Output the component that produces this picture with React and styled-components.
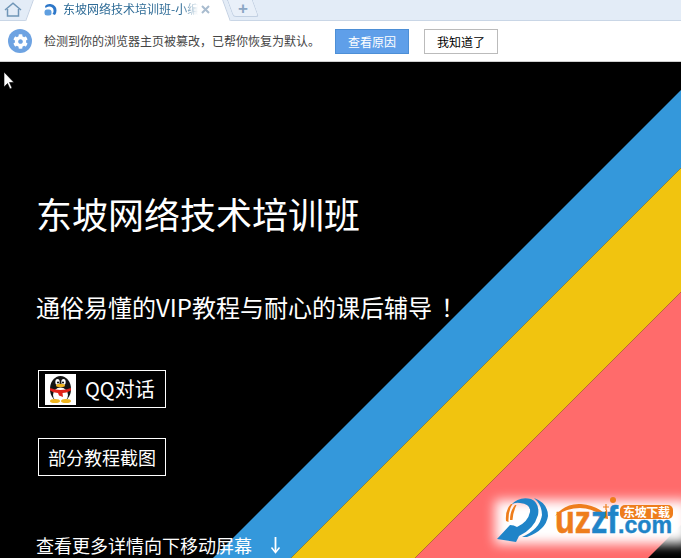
import React from 'react'
import styled, { createGlobalStyle } from 'styled-components'
import { FaCog } from 'react-icons/fa'

const Reset = createGlobalStyle`
  html, body { margin: 0; padding: 0; background: #000; overflow: hidden; }
  * { box-sizing: border-box; }
  body { font-family: "Noto Sans CJK SC", "Liberation Sans", sans-serif; }
`

const Page = styled.div`
  width: 681px;
  height: 558px;
  display: flex;
  flex-direction: column;
  overflow: hidden;
`

const TabBar = styled.div`
  height: 21px;
  flex: none;
  display: flex;
  align-items: stretch;
  background: #e3ecf7;
  border-bottom: 1px solid #c9d6e6;
`

const HomeButton = styled.div`
  width: 33px;
  flex: none;
  padding: 2px 0 0 4px;
`

const HomeIcon = styled.svg`
  display: block;
  width: 18px;
  height: 15px;
`

const Tab = styled.div`
  position: relative;
  width: 190px;
  height: 21px;
  flex: none;
  display: flex;
  align-items: center;
  padding: 0 0 3px 11px;
  background: #fff;
  z-index: 1;

  &::before, &::after {
    content: '';
    position: absolute;
    top: 0;
    bottom: 0;
    width: 8px;
    background: #fff;
    border: 0 solid #c2d0e2;
  }
  &::before {
    left: -4px;
    transform: skewX(-20deg);
    border-left-width: 1px;
  }
  &::after {
    right: -4px;
    transform: skewX(20deg);
    border-right-width: 1px;
  }
`

const TabIcon = styled.svg`
  width: 13px;
  height: 13px;
  flex: none;
  position: relative;
  z-index: 1;
`

const TabTitle = styled.span`
  width: 135px;
  margin-left: 6px;
  flex: none;
  overflow: hidden;
  white-space: nowrap;
  font-size: 12px;
  line-height: 16px;
  color: #2f6c97;
  -webkit-mask-image: linear-gradient(to right, #000 88%, transparent 100%);
  mask-image: linear-gradient(to right, #000 88%, transparent 100%);
`

const TabClose = styled.svg`
  width: 9px;
  height: 9px;
  margin-left: 3px;
  flex: none;
  position: relative;
  z-index: 1;
`

const NewTab = styled.div`
  width: 26px;
  height: 17px;
  margin-left: 7px;
  flex: none;
  display: flex;
  align-items: center;
  justify-content: center;
  position: relative;
  font-size: 17px;
  font-weight: 700;
  line-height: 15px;
  color: #8ba6c4;
  background: #e9f0f9;
  border: 1px solid #c2d0e2;
  border-top: 0;
  border-radius: 0 0 3px 3px;
  transform: skewX(20deg);
  font-family: "Liberation Sans", sans-serif;

  span { transform: skewX(-20deg); }
`

const InfoBar = styled.div`
  height: 41px;
  flex: none;
  display: flex;
  align-items: center;
  padding: 0 0 0 8px;
  background: #fff;
  border-bottom: 1px solid #cfcfcf;
`

const InfoIcon = styled.div`
  width: 24px;
  height: 24px;
  flex: none;
  display: flex;
  align-items: center;
  justify-content: center;
  border-radius: 50%;
  background: #6ea3e2;
  color: #fff;
  font-size: 15px;
`

const InfoText = styled.span`
  width: 291px;
  margin-left: 12px;
  flex: none;
  font-size: 12px;
  line-height: 16px;
  white-space: nowrap;
  color: #444;
`

const InfoButton = styled.button`
  width: 74px;
  height: 25px;
  padding: 0;
  margin-right: 15px;
  flex: none;
  font: inherit;
  font-size: 12px;
  color: ${({ $primary }) => ($primary ? '#fff' : '#000')};
  background: ${({ $primary }) => ($primary ? '#5f9fe9' : '#fff')};
  border: 1px solid ${({ $primary }) => ($primary ? '#4d8fd6' : '#bbb')};
`

const Hero = styled.main`
  position: relative;
  flex: 1;
  overflow: hidden;
  background: #000;
  color: #fff;
`

const Stripes = styled.svg`
  position: absolute;
  left: 0;
  top: 0;
  width: 681px;
  height: 496px;
`

const Cursor = styled.svg`
  position: absolute;
  left: 3px;
  top: 9px;
  width: 12px;
  height: 21px;
`

const Content = styled.div`
  position: relative;
  display: flex;
  flex-direction: column;
  align-items: flex-start;
  padding: 127px 0 0 36px;
`

const Title = styled.h1`
  margin: 0;
  font-size: 36px;
  font-weight: 400;
  line-height: 48px;
  white-space: nowrap;
`

const Subtitle = styled.h2`
  margin: 54px 0 0;
  font-size: 24px;
  font-weight: 400;
  line-height: 32px;
  white-space: nowrap;
`

const Bang = styled.span`
  margin-left: 9px;
`

const LinkButton = styled.a`
  width: 128px;
  height: 38px;
  margin: ${({ $gap }) => $gap}px 0 0 2px;
  display: flex;
  align-items: center;
  justify-content: ${({ $icon }) => ($icon ? 'flex-start' : 'center')};
  padding-left: ${({ $icon }) => ($icon ? '6px' : '0')};
  border: 1px solid #fff;
  font-size: ${({ $icon }) => ($icon ? '20px' : '18px')};
  line-height: 26px;
  white-space: nowrap;
`

const Penguin = styled.svg`
  width: 31px;
  height: 31px;
  margin-right: 9px;
  flex: none;
  background: #fff;
`

const MoreHint = styled.div`
  margin-top: 57px;
  display: flex;
  align-items: center;
  font-size: 18px;
  line-height: 24px;
  white-space: nowrap;
`

const DownArrow = styled.svg`
  width: 11px;
  height: 17px;
  margin-left: 18px;
  flex: none;
`

const Watermark = styled.div`
  position: absolute;
  left: 497px;
  top: 433px;
  width: 178px;
  height: 52px;

  &::before {
    content: '';
    position: absolute;
    left: -2px;
    right: -14px;
    top: 5px;
    bottom: 3px;
    background: #fff;
    filter: blur(6px);
  }
`

const LogoArt = styled.svg`
  position: relative;
  display: block;
  width: 178px;
  height: 52px;
  overflow: visible;
`

const QQPenguin = () => (
  <Penguin viewBox="0 0 31 31">
    <ellipse cx="15.5" cy="15" rx="10.5" ry="13" fill="#141414" />
    <ellipse cx="15.5" cy="21" rx="7.5" ry="7.5" fill="#fff" />
    <ellipse cx="12.5" cy="8" rx="2.2" ry="3" fill="#fff" />
    <ellipse cx="18.5" cy="8" rx="2.2" ry="3" fill="#fff" />
    <circle cx="13" cy="8.5" r="1.1" fill="#141414" />
    <circle cx="18" cy="8.5" r="1.1" fill="#141414" />
    <ellipse cx="15.5" cy="11.5" rx="4.5" ry="1.7" fill="#f0b51e" />
    <path d="M5 14 Q15.5 18 26 14 L26 16.5 Q21 19 17.5 19 L18 23 L14 21.5 L13 19 Q8 18.5 5 16.5 Z" fill="#e2231a" />
    <ellipse cx="10" cy="27" rx="5" ry="2" fill="#f0b51e" />
    <ellipse cx="21" cy="27" rx="5" ry="2" fill="#f0b51e" />
  </Penguin>
)

const Logo = () => (
  <LogoArt viewBox="0 0 178 52">
    <path d="M0 44 L13 30 Q17 30 20 32 Q31 27 33 17 Q34 9 23 8 Q18 7 14 10 Q22 1 34 4 Q43 8 41 20 Q37 34 22 41 L19 47 Z" fill="#1f84c8" />
    <path d="M37 3 Q51 8 51 21 Q49 35 30 42 L25 42 Q43 34 45 20 Q45 10 37 3 Z" fill="#1f84c8" />
    <path d="M9 26 Q8 15 14 9 L15.5 9 Q11 16 11.5 27 Z" fill="#ee7d1c" />
    <path d="M13 25 Q13 16 18 10 L19.5 10 Q16 17 15.5 25 Z" fill="#ee7d1c" />
    <path d="M58 21 Q68 8 84 9 Q98 10 107 18 L110 14 L111 24 L101 22 L104 20 Q94 13 83 13 Q70 13 58 21 Z" fill="#ee7d1c" />
    <text x="58" y="38" textLength="36" lengthAdjust="spacingAndGlyphs" fontFamily="'Liberation Sans', sans-serif" fontWeight="700" fontSize="38" fill="#ee7d1c" stroke="#ee7d1c" strokeWidth="0.6">uz</text>
    <text x="94" y="38" textLength="27" lengthAdjust="spacingAndGlyphs" fontFamily="'Liberation Sans', sans-serif" fontWeight="700" fontSize="38" fill="#1f84c8" stroke="#1f84c8" strokeWidth="0.6">zf</text>
    <text x="121" y="38" textLength="54" lengthAdjust="spacingAndGlyphs" fontFamily="'Liberation Sans', sans-serif" fontWeight="700" fontSize="23" fill="#1f84c8" stroke="#1f84c8" strokeWidth="0.4">.com</text>
    <circle cx="116" cy="5" r="3" fill="#ee7d1c" />
    <path d="M106 12 h6 M109 9 v6" stroke="#ee7d1c" strokeWidth="1.2" />
    <rect x="123" y="10" width="53" height="14" rx="5" fill="#ee7d1c" />
    <text x="126" y="21.5" textLength="47" fontFamily="'Noto Sans CJK SC', sans-serif" fontWeight="700" fontSize="12" fill="#fff">东坡下载</text>
  </LogoArt>
)

const App = () => (
  <Page>
    <Reset />
    <TabBar>
      <HomeButton>
        <HomeIcon viewBox="0 0 18 15" fill="none" stroke="#6f95b7" strokeWidth="1.5">
          <path d="M1 8 L9 1.2 L17 8" />
          <path d="M3.5 7 V14 H14.5 V7" />
        </HomeIcon>
      </HomeButton>
      <Tab>
        <TabIcon viewBox="0 0 13 13">
          <path d="M1 3 Q3 0.5 6.5 1 Q12.5 2 12.5 7.5 Q12.5 10 11 12 L8.5 11 Q10 9 9.5 7 Q9 3.5 5 3.5 Q3 3.5 1.5 5 Z" fill="#2d77c9" />
          <rect x="0.5" y="6.5" width="7" height="6" rx="2.5" fill="#5f9fe0" />
        </TabIcon>
        <TabTitle>东坡网络技术培训班-小编</TabTitle>
        <TabClose viewBox="0 0 9 9">
          <path d="M1 1 L8 8 M8 1 L1 8" stroke="#a9bccf" strokeWidth="2" />
        </TabClose>
      </Tab>
      <NewTab><span>+</span></NewTab>
    </TabBar>
    <InfoBar>
      <InfoIcon><FaCog /></InfoIcon>
      <InfoText>检测到你的浏览器主页被篡改，已帮你恢复为默认。</InfoText>
      <InfoButton $primary>查看原因</InfoButton>
      <InfoButton>我知道了</InfoButton>
    </InfoBar>
    <Hero>
      <Stripes viewBox="0 0 681 496">
        <polygon points="213,496 681,28 681,106 291,496" fill="#3498db" />
        <polygon points="291,496 681,106 681,230 415,496" fill="#f1c40f" />
        <polygon points="415,496 681,230 681,463 648,496" fill="#ff6b6b" />
      </Stripes>
      <Cursor viewBox="0 0 12 21">
        <path d="M1 1 V16 L4.5 12.5 L7 18 L9 17 L6.5 11.5 L11 11.5 Z" fill="#fff" stroke="#000" strokeWidth="0.6" />
      </Cursor>
      <Content>
        <Title>东坡网络技术培训班</Title>
        <Subtitle>通俗易懂的VIP教程与耐心的课后辅导<Bang>！</Bang></Subtitle>
        <LinkButton $gap={47} $icon><QQPenguin />QQ对话</LinkButton>
        <LinkButton $gap={30}>部分教程截图</LinkButton>
        <MoreHint>
          查看更多详情向下移动屏幕
          <DownArrow viewBox="0 0 11 17" fill="none" stroke="#fff">
            <path d="M5.5 0 V15" strokeWidth="1.8" />
            <path d="M1.5 10.5 L5.5 15.5 L9.5 10.5" strokeWidth="1.5" />
          </DownArrow>
        </MoreHint>
      </Content>
      <Watermark><Logo /></Watermark>
    </Hero>
  </Page>
)

export default App
